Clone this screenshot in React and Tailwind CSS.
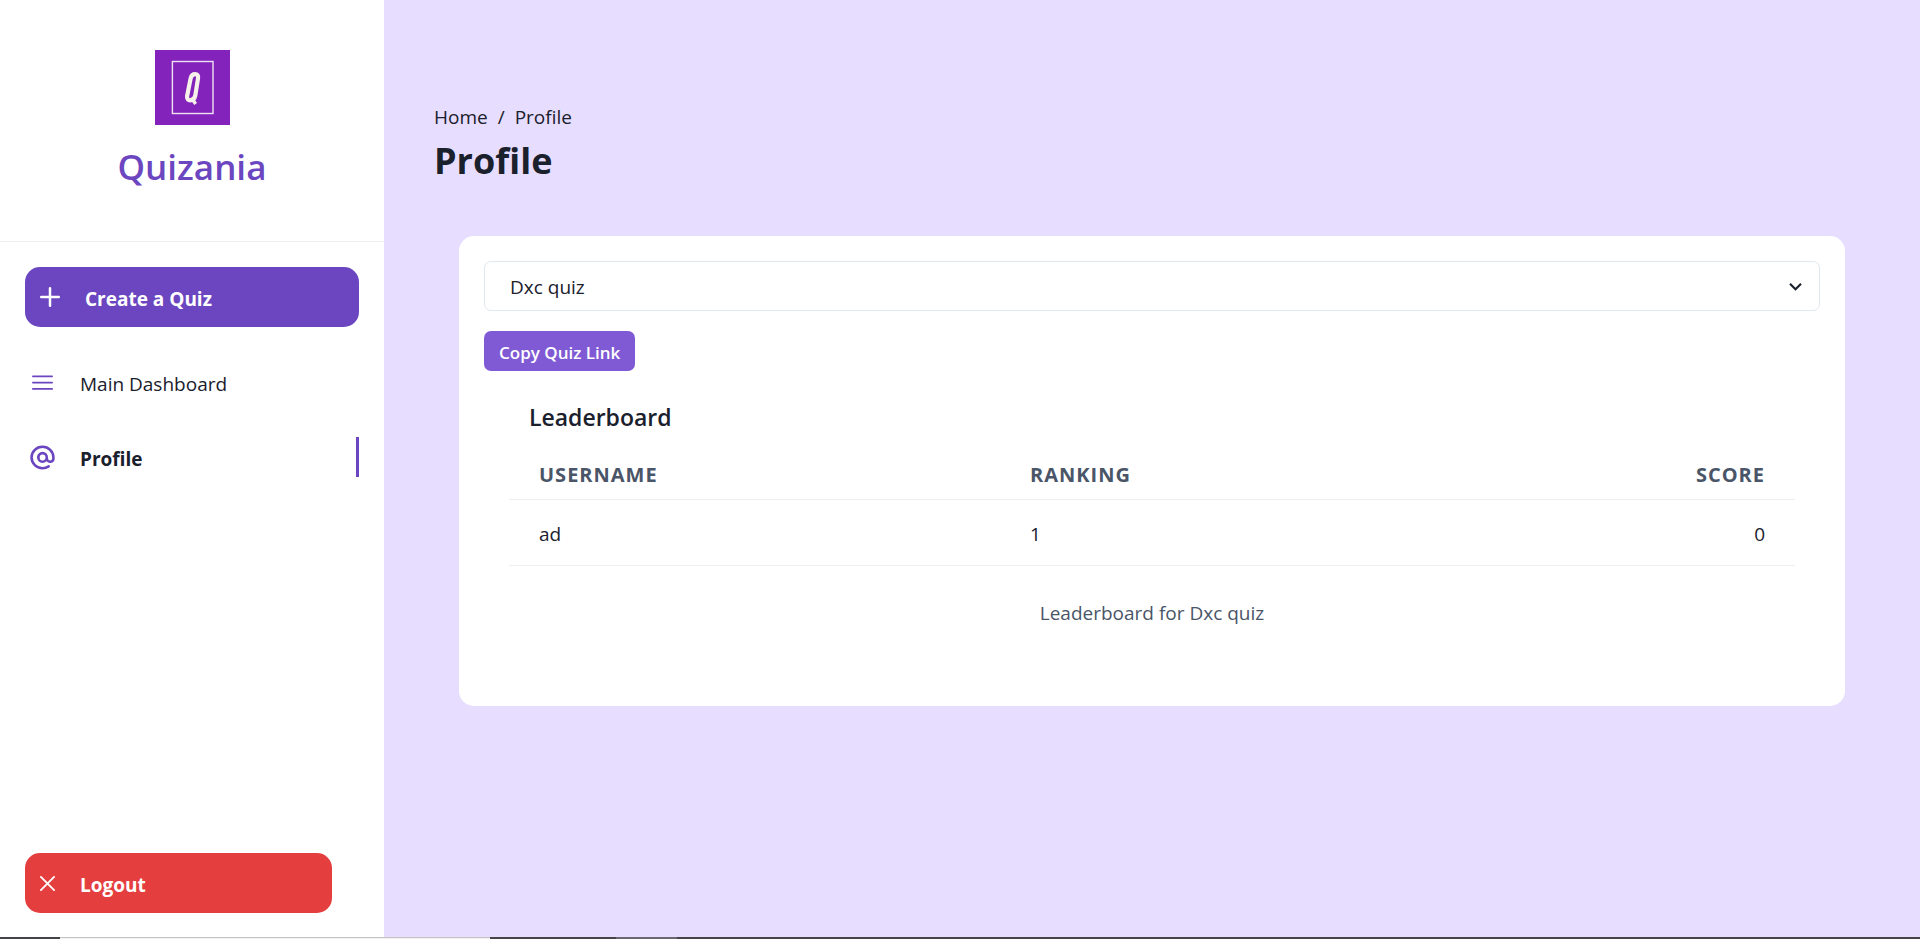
const strip = [
  "w-[60px] bg-[#454348]",
  "w-[430px] border-t border-[#c4c4c4] bg-[#f3f1f1]",
  "w-[126px] bg-[#454348]",
  "w-[61px] bg-[#6b6770]",
  "grow bg-[#454348]",
];

function Logo() {
  return (
    <svg className="size-[75px]" viewBox="0 0 75 75" role="img" aria-label="Quizania logo">
      <rect width="75" height="75" fill="#8323bb" />
      <rect x="17.4" y="11.5" width="40.6" height="52" fill="none" stroke="#f0e2f3" strokeWidth="1.4" />
      <path d="M35.6 28.5Q36.6 24.2 40.1 24.2Q43.7 24.2 43 28.5L40.2 46Q39.2 50.3 35.4 50.3Q31.6 50.3 32.1 46Z" fill="none" stroke="#f7f2e9" strokeWidth="4.2" />
      <path d="M36.3 47.5L40.6 54" stroke="#f7f2e9" strokeWidth="3.4" />
    </svg>
  );
}

function PlusIcon() {
  return (
    <svg className="size-5" viewBox="0 0 20 20" fill="none" stroke="currentColor" strokeWidth="2.5" strokeLinecap="round" aria-hidden="true">
      <path d="M10 1.25V18.75M1.25 10H18.75" />
    </svg>
  );
}

function MenuIcon() {
  return (
    <svg className="size-[25px]" viewBox="0 0 25 25" fill="none" stroke="currentColor" strokeWidth="1.8" strokeLinecap="round" aria-hidden="true">
      <path d="M2.9 6.3H22.1M2.9 12.6H22.1M2.9 18.9H22.1" />
    </svg>
  );
}

function AtSignIcon() {
  return (
    <svg className="size-[25px]" viewBox="0 0 24 24" fill="currentColor" aria-hidden="true">
      <path d="M12,.5A11.634,11.634,0,0,0,.262,12,11.634,11.634,0,0,0,12,23.5a11.836,11.836,0,0,0,6.624-2,1.25,1.25,0,1,0-1.393-2.076A9.34,9.34,0,0,1,12,21a9.132,9.132,0,0,1-9.238-9A9.132,9.132,0,0,1,12,3a9.132,9.132,0,0,1,9.238,9v.891a1.943,1.943,0,0,1-3.884,0V12A5.355,5.355,0,1,0,12,17.261a5.376,5.376,0,0,0,3.861-1.634,4.438,4.438,0,0,0,7.877-2.736V12A11.634,11.634,0,0,0,12,.5Zm0,14.261A2.763,2.763,0,1,1,14.854,12,2.812,2.812,0,0,1,12,14.761Z" />
    </svg>
  );
}

function CrossIcon() {
  return (
    <svg className="size-[15px]" viewBox="0 0 15 15" fill="none" stroke="currentColor" strokeWidth="1.8" strokeLinecap="round" aria-hidden="true">
      <path d="M0.9 0.9L14.1 14.1M14.1 0.9L0.9 14.1" />
    </svg>
  );
}

function ChevronIcon() {
  return (
    <svg className="pointer-events-none absolute top-[13px] right-3 size-[25px]" viewBox="0 0 24 24" fill="#1a202c" aria-hidden="true">
      <path d="M16.59 8.59L12 13.17 7.41 8.59 6 10l6 6 6-6z" />
    </svg>
  );
}

export default function App() {
  return (
    <div className="flex min-h-screen flex-col bg-[#e7ddff] font-['Open_Sans','Noto_Sans',sans-serif] text-[19px] leading-[30px] text-[#1a202c]">
      <div className="flex grow">
        <aside className="flex w-1/5 shrink-0 flex-col bg-white">
          <div className="flex h-[242px] flex-col items-center gap-[14px] border-b border-[#ededed] pt-[50px]">
            <Logo />
            <span className="text-[35px] leading-[56px] font-semibold text-[#6b46c0]">Quizania</span>
          </div>
          <nav className="flex grow flex-col px-[25px] pt-[25px] pb-6">
            <button type="button" className="flex h-[60px] items-center gap-[25px] rounded-[15px] bg-[#6b46c0] px-[15px] font-bold text-white">
              <PlusIcon />
              <span className="pt-[3px]">Create a Quiz</span>
            </button>
            <a href="#dashboard" className="mt-[35px] flex h-10 items-center">
              <span className="w-[55px] pl-[5px] text-[#6b46c0]"><MenuIcon /></span>
              <span className="pt-[3px]">Main Dashboard</span>
            </a>
            <a href="#profile" aria-current="page" className="mt-[35px] flex h-10 items-center border-r-[3px] border-[#6b46c0] font-bold">
              <span className="w-[55px] pl-[5px] text-[#6b46c0]"><AtSignIcon /></span>
              <span className="pt-[3px]">Profile</span>
            </a>
            <button type="button" className="mt-auto mr-[27px] flex h-[60px] items-center gap-[25px] rounded-[15px] bg-[#e53e3e] px-[15px] font-bold text-white">
              <CrossIcon />
              <span className="pt-[3px]">Logout</span>
            </button>
          </nav>
        </aside>
        <main className="min-w-0 grow pt-[102px] pr-[75px] pl-[50px]">
          <nav aria-label="Breadcrumb" className="flex gap-[10px]">
            <a href="#home">Home</a>
            <span>/</span>
            <a href="#profile">Profile</a>
          </nav>
          <h1 className="text-[36px] leading-[58px] font-bold">Profile</h1>
          <section className="mt-[46px] ml-[25px] rounded-[15px] bg-white p-[25px] pb-[78px]">
            <div className="relative">
              <select aria-label="Quiz" className="block h-[50px] w-full appearance-none rounded-[7px] border border-[#e2e8f0] bg-white pt-[2px] pr-12 pl-[25px]">
                <option>Dxc quiz</option>
              </select>
              <ChevronIcon />
            </div>
            <button type="button" className="mt-5 block h-10 rounded-[7px] bg-[#805ad5] px-[15px] pt-[3px] text-[17px] font-semibold text-white">
              Copy Quiz Link
            </button>
            <div className="px-[25px] pt-[31px]">
              <h2 className="pl-5 text-[23px] leading-[30px] font-semibold">Leaderboard</h2>
              <table className="mt-[17px] w-full caption-bottom">
                <caption className="pt-8 text-[#4a5568]">Leaderboard for Dxc quiz</caption>
                <thead>
                  <tr className="h-[50px] border-b border-[#edf0f0] text-[20px] text-[#4a5568] uppercase">
                    <th className="w-[491px] px-[30px] pt-[2px] text-left font-bold tracking-wider">Username</th>
                    <th className="px-[30px] pt-[2px] text-left font-bold tracking-wider">Ranking</th>
                    <th className="px-[30px] pt-[2px] text-right font-bold tracking-wider">Score</th>
                  </tr>
                </thead>
                <tbody>
                  <tr className="h-[66px] border-b border-[#edf0f0]">
                    <td className="px-[30px] pt-[3px]">ad</td>
                    <td className="px-[30px] pt-[3px]">1</td>
                    <td className="px-[30px] pt-[3px] text-right">0</td>
                  </tr>
                </tbody>
              </table>
            </div>
          </section>
        </main>
      </div>
      <div className="flex h-[2px]" aria-hidden="true">
        {strip.map((part, i) => (
          <span key={i} className={part} />
        ))}
      </div>
    </div>
  );
}
